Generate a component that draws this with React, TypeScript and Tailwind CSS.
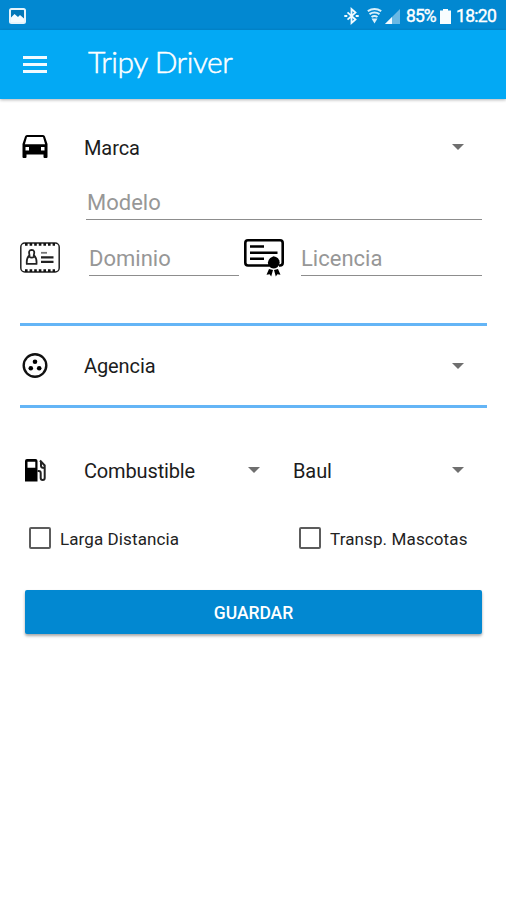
import React from "react";

function Caret() {
  return (
    <svg width="12" height="6" viewBox="0 0 12 6" className="shrink-0">
      <path d="M0 0h12L6 6z" fill="#6f6f6f" />
    </svg>
  );
}

function StatusBar() {
  return (
    <div className="flex h-[30px] items-center bg-[#0288d1] pl-[9px] pr-[9px] pt-[2px] text-white">
      <svg width="17" height="16" viewBox="0 0 17 16" className="-mt-px">
        <rect x="1" y="1" width="15" height="14" rx="1.500" fill="#0277b8" stroke="#e6f4fc" strokeWidth="2" />
        <path d="M2 14V9.500L5.500 6l3.500 3 2-2 4 3.500V14z" fill="#f4fbff" />
      </svg>
      <div className="grow" />
      <svg width="15" height="18" viewBox="0 0 15 18" fill="none" stroke="#f0faff" strokeWidth="1.8">
        <path d="M3.500 5.300l8 7.200-4 3.500V2l4 3.500-8 7.200" />
        <path d="M.3 9h3M11.700 9h3" strokeWidth="2.200" />
      </svg>
      <svg width="15" height="18" viewBox="0 0 15 18" className="ml-[8px]" fill="none" stroke="#d8effb" strokeWidth="2">
        <path d="M.8 4.200q6.700-4.300 13.400 0M2.500 7.200q5-3.200 10 0M4.500 10q3-2 6 0" />
        <path d="M4.500 11.500h6L7.500 16.500z" fill="#d8effb" stroke="none" />
      </svg>
      <svg width="15" height="15" viewBox="0 0 15 15" className="ml-[3px]">
        <path d="M0 15L15 0v15z" fill="#69b8e4" />
        <path d="M0 15l7-7v7z" fill="#f2faff" />
      </svg>
      <span className="ml-[6px] w-[31px] whitespace-nowrap text-[17.5px] leading-[28px] tracking-[-0.9px] [-webkit-text-stroke:0.4px_white]">85%</span>
      <svg width="11" height="15" viewBox="0 0 11 15" className="ml-[3px]" fill="#f8fdff">
        <path d="M3 0h5v1.500h3V15H0V1.500h3z" />
      </svg>
      <span className="ml-[5px] w-[41px] whitespace-nowrap text-[17.5px] leading-[28px] tracking-[-0.7px] [-webkit-text-stroke:0.4px_white]">18:20</span>
    </div>
  );
}

function CarIcon() {
  return (
    <svg width="26" height="24" viewBox="0 0 26 24">
      <path
        fillRule="evenodd"
        d="M5 0h16q1.500 0 2 1.500L25.500 9v13q0 1-1 1h-2q-1 0-1-1v-2.500h-17V22q0 1-1 1h-2q-1 0-1-1V9L3 1.500Q3.500 0 5 0zM5 2L2.900 9.300h20.200L21 2zM3.500 12v3.500H7V12zM19 12v3.500h3.500V12z"
      />
    </svg>
  );
}

function PlateIcon() {
  return (
    <svg width="40" height="31" viewBox="0 0 40 31" fill="none" stroke="#222">
      <rect x=".8" y="1" width="38.400" height="29" rx="4" strokeWidth="1.500" />
      <path d="M5 2.300h30M5 28.700h30" stroke="#111" strokeWidth="2.800" strokeDasharray="2.600 2" />
      <path d="M9.500 13.200Q8 8 11.700 7.800Q15.300 8 13.800 13.200Q17 16 16.500 21.800H6.800Q6.300 16 9.500 13.200z" strokeWidth="1.800" />
      <path d="M9 14.300q2.700 2.500 5.400 0" strokeWidth="1.600" />
      <path d="M21 10.800h6" stroke="#777" strokeWidth="1.800" />
      <path d="M21 15.300h12.500M21 19.800h12.500" strokeWidth="2.200" />
    </svg>
  );
}

function CertificateIcon() {
  return (
    <svg width="40" height="38" viewBox="0 0 40 38">
      <path d="M25 26.500H4q-2.700 0-2.700-2.700V4q0-2.700 2.700-2.700h32q2.700 0 2.700 2.700v19.800q0 2.700-2.700 2.700h-1" fill="none" stroke="#000" strokeWidth="2.600" />
      <path d="M6 7.500h14M6 13.700h27.500M6 19.700h14" stroke="#000" strokeWidth="2.400" />
      <path d="M29.500 17.300l2.500.7 2 1.300 1.200 2 .5 2.500-.8 2.500-1.500 2-2 1-1.900.3-2.200-.6-2-1.200-1.100-2.200-.3-2 .8-2.500 1.500-2z" />
      <path d="M25 30l4 1-1.800 6.500-1.600-2.200-3.100.4zM34 30l-4 1 1.800 6.500 1.600-2.200 3.100.4z" />
    </svg>
  );
}

function AgencyIcon() {
  return (
    <svg width="26" height="26" viewBox="0 0 26 26">
      <circle cx="13" cy="12.500" r="11.300" fill="none" stroke="#111" strokeWidth="2.400" />
      <circle cx="13" cy="8.800" r="2.300" />
      <circle cx="8.800" cy="15.200" r="2.300" />
      <circle cx="17.200" cy="15.200" r="2.300" />
    </svg>
  );
}

function FuelIcon() {
  return (
    <svg width="22" height="23" viewBox="0 0 22 23">
      <path fillRule="evenodd" d="M2 0h8.500q2 0 2 2v20.500H0V2Q0 0 2 0zM2.500 2.700v6h7.800v-6z" />
      <path d="M12.500 12h1.300q1.900 0 1.900 2v5q0 2 2 2t2-2V6.500L15 1.500M16 3v4q0 2 3.500 2" fill="none" stroke="#222" strokeWidth="2" />
    </svg>
  );
}

function Option({ label, className }: { label: string; className: string }) {
  return (
    <label className="flex items-center">
      <span className="h-[22px] w-[22px] rounded-[2px] border-2 border-[#5c5c5c]" />
      <span className={"ml-[9px] whitespace-nowrap pt-[2px] text-[17px] leading-[22px] text-[#222] " + className}>{label}</span>
    </label>
  );
}

export default function App() {
  return (
    <div className="h-[900px] w-[506px] overflow-hidden bg-white font-['Roboto',sans-serif] text-[#1c1c1c]">
      <StatusBar />
      <header className="flex h-[69px] items-center bg-[#03a9f4] pl-[23px] shadow-[0_1px_3px_rgba(0,0,0,0.3)]">
        <div className="flex w-6 flex-col gap-[4px]">
          <span className="h-[3px] bg-[#f0faff]" />
          <span className="h-[3px] bg-[#f0faff]" />
          <span className="h-[3px] bg-[#f0faff]" />
        </div>
        <h1 className="-mt-[8px] ml-[41px] whitespace-nowrap font-['Lato',sans-serif] text-[30px] font-light leading-9 tracking-[-0.5px] text-white [-webkit-text-stroke:0.5px_white]">Tripy Driver</h1>
      </header>

      <main>
        <div className="flex h-[96px] items-center pl-[22px] pr-[42px]">
          <CarIcon />
          <span className="ml-[36px] grow pt-px text-[20px] tracking-[-0.1px]">Marca</span>
          <Caret />
        </div>
        <div className="-mt-[9px] ml-[86px] mr-[24px] h-[34px] border-b border-[#8d8d8d] pl-px text-[22px] leading-[34px] text-[#979797]">Modelo</div>
        <div className="flex h-[57px] pl-[20px] pr-[24px]">
          <div className="w-[69px] pt-[22px]"><PlateIcon /></div>
          <div className="h-[56px] w-[150px] border-b border-[#8d8d8d] pt-[22px] text-[22px] leading-[34px] text-[#979797]">Dominio</div>
          <div className="ml-[5px] w-[57px] pt-[19px]"><CertificateIcon /></div>
          <div className="h-[56px] grow border-b border-[#8d8d8d] pt-[22px] text-[22px] leading-[34px] text-[#979797]">Licencia</div>
        </div>
        <div className="ml-[20px] mr-[19px] mt-[46px] flex h-[85px] items-center border-y-[3px] border-[#64b5f6] pl-[2px] pr-[23px]">
          <AgencyIcon />
          <span className="ml-[36px] grow pt-px text-[20px] tracking-[-0.1px]">Agencia</span>
          <Caret />
        </div>
        <div className="mt-[38px] flex h-[48px] items-center pl-[25px] pr-[42px]">
          <FuelIcon />
          <span className="ml-[37px] w-[164px] pt-px text-[20px] tracking-[-0.15px]">Combustible</span>
          <Caret />
          <span className="ml-[33px] grow pt-px text-[20px] tracking-[-0.1px]">Baul</span>
          <Caret />
        </div>
        <div className="mt-[32px] grid grid-cols-[270px_1fr] pl-[29px]">
          <Option label="Larga Distancia" className="tracking-[0.1px]" />
          <Option label="Transp. Mascotas" className="tracking-[0.12px]" />
        </div>
        <button className="ml-[25px] mt-[40px] block h-[44px] w-[457px] rounded-[2px] bg-[#0288d1] pt-[2px] text-[17.5px] font-medium tracking-[-0.05px] text-white shadow-[0_2px_3px_rgba(0,0,0,0.35)]">GUARDAR</button>
      </main>
    </div>
  );
}
